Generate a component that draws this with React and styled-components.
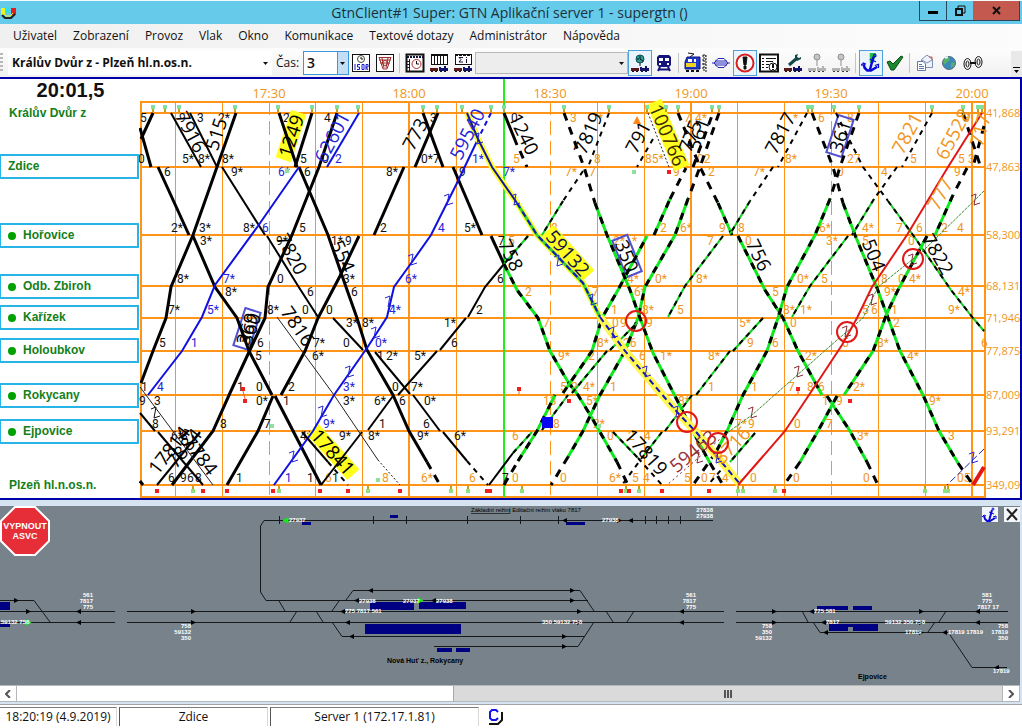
import { useState } from "react";
import styled, { createGlobalStyle, css } from "styled-components";

const GlobalStyle = createGlobalStyle`
  * {
    box-sizing: border-box;
  }
  body {
    margin: 0;
    background: #d6e3f0;
    font-family: "Open Sans", "Noto Sans", sans-serif;
    font-size: 12px;
    color: #111;
  }
  button, select {
    font: inherit;
    color: inherit;
    margin: 0;
  }
`;

const Window = styled.div`
  display: flex;
  flex-direction: column;
  min-height: 100vh;
`;

/* ---------- title bar and menu ---------- */

const TitleBar = styled.header`
  display: flex;
  align-items: center;
  height: 24px;
  background: #66cbea;
  border-top: 1px solid #f4fbfd;
`;

const AppLogo = styled.svg`
  width: 18px;
  height: 16px;
`;

const Title = styled.h1`
  flex: 1;
  margin: 0;
  padding-left: 82px;
  text-align: center;
  font-size: 14px;
  line-height: 22px;
  font-weight: 400;
  color: #1d3038;
`;

const WindowButtons = styled.div`
  display: flex;
  align-self: flex-start;
  margin-right: 2px;
`;

const WindowButton = styled.button`
  display: flex;
  align-items: center;
  justify-content: center;
  width: ${(p) => (p.$close ? 47 : 28)}px;
  height: 20px;
  padding: 0;
  border: 1px solid #27495a;
  border-top: none;
  border-left-width: ${(p) => (p.$close ? 0 : 1)}px;
  margin-right: ${(p) => (p.$close ? 0 : -1)}px;
  background: ${(p) => (p.$close ? "#c4594f" : "#66cbea")};
`;

const MenuBar = styled.nav`
  display: flex;
  align-items: center;
  gap: 16px;
  height: 24px;
  padding-left: 13px;
  background: linear-gradient(90deg, #f0f0f0, #fcfcfc);
`;

const MenuItem = styled.button`
  padding: 0;
  border: none;
  background: none;
  font-size: 12px;
  line-height: 20px;
`;

/* ---------- toolbar ---------- */

const Toolbar = styled.div`
  display: flex;
  align-items: center;
  height: 29px;
  background: linear-gradient(#fdfdfd, #f1f1f1);
`;

const Grip = styled.div`
  width: 3px;
  height: 20px;
  margin-right: 5px;
  background: repeating-linear-gradient(#b8b8b8 0 2px, transparent 2px 4px);
`;

const SelectWrap = styled.div`
  position: relative;
  display: flex;
  width: ${(p) => p.$width}px;
  height: ${(p) => p.$height}px;

  svg {
    position: absolute;
    right: 3px;
    top: 50%;
    margin-top: -1px;
    pointer-events: none;
  }
`;

const RouteSelect = styled.select`
  appearance: none;
  width: 100%;
  padding: 0 4px;
  border: none;
  background: #fff;
  font-weight: 700;
`;

const TimeSelect = styled.select`
  appearance: none;
  width: 100%;
  padding: 0 3px;
  border: 1px solid #3d97dc;
  background: linear-gradient(90deg, #fff 33px, #3d97dc 33px 34px, #c4dff5 34px);
  font-size: 14px;
  font-weight: 600;
`;

const TrainSelect = styled.select`
  appearance: none;
  width: 100%;
  border: 1px solid #b8b8b8;
  background: #ededed;
  opacity: 1;
`;

const TimeLabel = styled.label`
  margin: 0 4px;
`;

const ToolButton = styled.button`
  display: flex;
  align-items: center;
  justify-content: center;
  flex: none;
  width: ${(p) => (p.$wide ? 27 : 24)}px;
  height: 26px;
  padding: 0;
  border: 1px solid transparent;
  background: none;
  ${(p) =>
    p.$active &&
    css`
      border-color: #4f9fdb;
      background: #eaf4fd;
    `}
`;

const Separator = styled.div`
  width: 1px;
  height: 20px;
  margin: 0 3px 0 2px;
  background: #c4c4c4;
`;

const Overflow = styled.button`
  align-self: flex-end;
  width: 11px;
  height: 26px;
  padding: 12px 0 0;
  margin-left: auto;
  border: none;
  background: #e9e9e9;
  line-height: 0;
`;

/* ---------- train graph ---------- */

const GraphPanel = styled.main`
  display: flex;
  background: #fff;
  border: 2px solid #0000a8;
  border-left: none;
`;

const StationColumn = styled.div`
  flex: none;
  display: flex;
  flex-direction: column;
  width: 139px;
  font-family: "Liberation Sans", Arial, sans-serif;
`;

const Clock = styled.time`
  padding-left: 2px;
  font-size: 20px;
  line-height: 22px;
  font-weight: 700;
  text-align: center;
`;

const stationText = css`
  height: 25px;
  font-size: 12px;
  line-height: 21px;
  font-weight: 700;
  color: #14801a;
`;

const StationName = styled.div`
  ${stationText}
  margin-top: ${(p) => p.$gap}px;
  padding: 2px 0 2px 9px;
`;

const StationButton = styled.button`
  ${stationText}
  display: flex;
  align-items: center;
  gap: 7px;
  margin-top: ${(p) => p.$gap}px;
  padding: 0 7px;
  border: 2px solid #27b4e6;
  border-left-width: 1px;
  background: #fff;
  text-align: left;
`;

const Dot = styled.span`
  width: 8px;
  height: 8px;
  border-radius: 50%;
  background: #00a000;
`;

const Graph = styled.svg`
  flex: 1;
  min-width: 0;
  height: 419px;
`;

const GridLine = styled.line`
  stroke: #ff9418;
  stroke-width: ${(p) => p.$width || 1};
  stroke-dasharray: ${(p) => (p.$dashed ? "14 6" : "none")};
  shape-rendering: crispEdges;
`;

const AxisText = styled.text`
  font-size: ${(p) => (p.$middle ? 13 : 11)}px;
  fill: #f0961c;
  text-anchor: ${(p) => (p.$middle ? "middle" : "start")};
`;

const Minute = styled.text`
  font-family: Roboto, "Open Sans", sans-serif;
  font-size: 12px;
  fill: ${(p) => p.$color};
`;

const Track = styled.polyline`
  fill: none;
  stroke: ${(p) => p.$color};
  stroke-width: ${(p) => p.$width};
  stroke-dasharray: ${(p) => p.$dash || "none"};
`;

const TrainText = styled.text`
  font-family: "Open Sans", "Noto Sans", sans-serif;
  font-size: 19px;
  font-weight: 400;
  fill: ${(p) => p.$color || "#000"};
  text-anchor: middle;
`;

const TIMES = [
  [269, "17:30"], [409, "18:00"], [550, "18:30"], [691, "19:00"], [831, "19:30"], [972, "20:00"],
];

const COLUMNS = [175, 222, 315, 362, 456, 597, 644, 737, 784, 878, 925];

const KILOMETRES = [
  [113, "41,868"], [167, "47,863"], [235, "58,300"], [286, "68,131"], [318, "71,946"],
  [351, "77,875"], [395, "87,009"], [431, "93,291"], [485, "349,09"],
];

const STROKES = {
  main: [["#000", 3]],
  slow: [["#000", 2]],
  thin: [["#222", 1]],
  dot: [["#222", 1, "2 2"]],
  plan: [["#000", 3, "8 7"]],
  planSlow: [["#000", 2, "5 5"]],
  ahead: [["#10e820", 3], ["#000", 3, "7 8"]],
  aheadSlow: [["#10d020", 2], ["#000", 2, "5 5"]],
  blue: [["#1010e0", 2]],
  blueDash: [["#1010e0", 2, "5 4"]],
  blueThin: [["#2020b0", 1, "7 3"]],
  followed: [["#ffff30", 6], ["#1515a0", 2]],
  followedAhead: [["#ffff30", 6], ["#3ad23a", 3], ["#1515c0", 2, "6 4"]],
  followedPlan: [["#fff850", 8], ["#1515c0", 2, "6 4"]],
  red: [["#e01818", 2]],
  redWide: [["#e01818", 4]],
  freight: [["#3a8a2a", 1, "3 1"]],
  freightDot: [["#902030", 1, "2 3"]],
};

const TRACKS = [
  ["main", "153,113 141,139"],
  ["main", "140,128 151,167"],
  ["main", "158,167 189,235"],
  ["main", "193,236 215,287 237,318 249,351 272,395"],
  ["main", "275,396 321,485"],
  ["main", "236,113 217,167 193,235 171,287 166,318 153,351 141,383"],
  ["slow", "171,113 201,167"],
  ["slow", "190,113 217,167"],
  ["slow", "222,167 265,235"],
  ["slow", "267,236 300,289 318,317"],
  ["slow", "333,318 363,350"],
  ["slow", "375,352 410,394"],
  ["slow", "413,395 440,431"],
  ["slow", "443,432 467,461"],
  ["planSlow", "467,461 488,485"],
  ["main", "312,113 295,167"],
  ["main", "279,113 297,167"],
  ["main", "299,167 328,235 346,287 357,318 367,350 393,395 409,431 427,462"],
  ["plan", "427,462 440,485"],
  ["main", "337,113 319,167 292,235 268,287 265,318 249,352 230,393 213,431 172,485"],
  ["main", "359,236 340,276 318,318 305,351 281,395"],
  ["main", "273,396 258,431 227,485"],
  ["main", "423,113 443,167"],
  ["main", "438,113 415,167"],
  ["main", "404,167 374,235"],
  ["main", "453,167 482,235"],
  ["main", "491,236 504,264"],
  ["slow", "504,264 485,287 468,317"],
  ["slow", "466,318 440,350"],
  ["slow", "437,351 398,395"],
  ["slow", "393,396 368,430"],
  ["slow", "362,432 321,485"],
  ["thin", "277,317 334,395 378,460"],
  ["dot", "378,460 400,485"],
  ["thin", "140,387 213,485"],
  ["slow", "140,413 155,431"],
  ["slow", "158,432 203,485"],
  ["slow", "200,432 157,485"],
  ["main", "140,481 143,485"],
  ["blue", "359,113 327,167"],
  ["blue", "299,167 258,226 215,285 202,317 182,351 148,395"],
  ["blueDash", "491,113 478,139"],
  ["blue", "478,139 458,181 431,235 412,262 394,287 387,317 367,348 334,395 313,431 274,485"],
  ["aheadSlow", "528,236 504,264"],
  ["ahead", "504,264 517,290 538,318 550,351 568,382 578,395 592,418 617,462"],
  ["plan", "617,462 628,485"],
  ["slow", "489,485 513,453"],
  ["aheadSlow", "513,453 532,432"],
  ["plan", "504,485 518,461"],
  ["ahead", "518,461 537,431 555,395"],
  ["ahead", "563,393 592,351 602,318 618,290 647,236"],
  ["ahead", "654,235 670,199"],
  ["plan", "670,199 686,168"],
  ["plan", "693,167 713,113"],
  ["plan", "719,113 700,167 688,199"],
  ["ahead", "688,199 675,235 645,287 638,318 625,351 600,395 583,431 568,457"],
  ["plan", "568,457 551,485"],
  ["main", "504,113 517,145"],
  ["plan", "520,151 527,167"],
  ["plan", "564,113 584,167 595,203"],
  ["ahead", "595,203 607,235 630,290 640,318 653,353 677,400 692,430 710,463"],
  ["plan", "710,463 723,485"],
  ["planSlow", "609,113 588,167"],
  ["planSlow", "583,171 563,201"],
  ["aheadSlow", "563,201 542,235"],
  ["planSlow", "653,139 637,167"],
  ["dot", "648,113 669,167"],
  ["plan", "678,113 700,167 718,203"],
  ["ahead", "718,203 732,235"],
  ["ahead", "738,236 765,290 783,318 798,351 822,395"],
  ["ahead", "827,396 850,431 867,462"],
  ["plan", "867,462 878,485"],
  ["planSlow", "807,113 778,167"],
  ["planSlow", "773,167 750,201"],
  ["aheadSlow", "750,201 730,234"],
  ["aheadSlow", "723,236 685,286 668,317"],
  ["aheadSlow", "763,318 733,351"],
  ["aheadSlow", "730,351 696,395"],
  ["aheadSlow", "692,395 665,431"],
  ["aheadSlow", "662,432 644,455"],
  ["planSlow", "644,455 622,485"],
  ["aheadSlow", "542,430 568,395"],
  ["aheadSlow", "572,393 607,351"],
  ["aheadSlow", "610,350 637,323"],
  ["plan", "859,113 840,167 830,199"],
  ["ahead", "830,199 815,235 787,287 778,318 767,351 743,395 727,431 716,452"],
  ["plan", "716,452 693,485"],
  ["plan", "812,113 833,167 843,203"],
  ["ahead", "843,203 855,235 877,288 887,315 900,351 923,395 939,431 958,463"],
  ["plan", "958,463 973,485"],
  ["planSlow", "836,113 863,167 888,201"],
  ["aheadSlow", "888,201 913,235 951,290 973,318 984,331"],
  ["planSlow", "932,113 902,167"],
  ["planSlow", "897,167 874,199"],
  ["aheadSlow", "874,199 852,235"],
  ["aheadSlow", "848,236 810,286 792,317"],
  ["plan", "963,113 980,165"],
  ["plan", "984,126 973,167"],
  ["plan", "967,168 953,195"],
  ["ahead", "953,195 935,235"],
  ["ahead", "927,236 898,290 887,313 873,351 844,395"],
  ["ahead", "837,396 818,431 800,462"],
  ["plan", "800,462 784,485"],
  ["aheadSlow", "755,433 730,462"],
  ["planSlow", "727,463 708,485"],
  ["aheadSlow", "613,432 638,458"],
  ["planSlow", "638,458 662,485"],
  ["slow", "302,432 328,462"],
  ["planSlow", "328,462 348,485"],
  ["freight", "984,191 923,251 878,287 863,318 837,340 752,415 727,433"],
  ["freightDot", "727,433 667,485"],
  ["blueThin", "984,449 947,485"],
  ["followed", "467,113 478,139 492,167 517,203"],
  ["followedAhead", "517,203 537,235 583,283 600,317"],
  ["followedPlan", "600,317 625,351 677,412 697,433 740,484"],
  ["red", "982,113 948,167 907,235 872,287 857,318 842,345 817,383 785,431 738,485"],
  ["redWide", "973,485 984,467"],
];

const DARK = "#111";
const BLUE = "#2424d8";
const ORANGE = "#f0961c";

// [baseline, colour, "x:text ..."]
const MINUTES = [
  [122, DARK, "140:5 179:9 197:3 218:2* 283:2 324:4 430:3 511:0"],
  [163, DARK, "138:0 182:5* 198:8* 222:8* 300:5 322:0 421:0*7"],
  [163, BLUE, "335:2 472:1*"],
  [176, DARK, "164:6 231:9* 304:6 386:8* 459:9"],
  [176, BLUE, "278:6* 503:7*"],
  [232, DARK, "171:2* 199:3* 243:8* 299:5 380:2 464:5*"],
  [232, BLUE, "262:6 438:4"],
  [245, DARK, "200:3* 276:9* 331:1* 345:9 498:7"],
  [283, DARK, "177:8* 277:0 343:3* 497:6"],
  [283, BLUE, "223:7* 405:6*"],
  [296, DARK, "225:8* 307:6 351:6"],
  [314, DARK, "168:7* 267:8* 302:0 326:0 476:2"],
  [314, BLUE, "207:5* 389:4*"],
  [327, DARK, "346:3* 362:8* 444:1*"],
  [347, DARK, "159:5 257:6 313:7* 343:0 451:6"],
  [347, BLUE, "191:1 375:0*"],
  [360, DARK, "255:5 312:6* 377:1 386:2* 414:5*"],
  [391, DARK, "141:1 237:1 256:0 288:2 392:0 411:7*"],
  [391, BLUE, "157:4 343:3*"],
  [405, DARK, "139:9 154:3 256:0* 283:1 343:3* 374:6* 399:6 424:0*"],
  [428, DARK, "152:8 220:8 264:7 379:1 423:6"],
  [428, BLUE, "323:9*"],
  [440, DARK, "171:6* 181:8 300:4* 339:9* 368:8* 417:9* 454:6*"],
  [482, DARK, "168:6 180:9 187:6 195:8 236:1 307:1 332:1 502:7"],
  [482, BLUE, "285:1"],
  [122, ORANGE, "570:3 598:* 684:7 695:4* 793:* 818:6 847:8 963:8"],
  [163, ORANGE, "513:5 594:8 645:85* 697:02 785:8* 847:27 910:5 958:5 968:3"],
  [176, ORANGE, "565:7* 589:7 673:9 708:2 753:7* 837:0 881:4 954:9"],
  [232, ORANGE, "551:8 660:2 680:6* 719:9 738:8 819:6* 862:4* 896:7 916:6 941:2 957:4"],
  [245, ORANGE, "508:5 547:6 613:2* 632:* 707:7 745:0 826:3* 862:5 908:0"],
  [283, ORANGE, "627:4* 655:0* 696:8* 797:0* 821:5 881:8 898:0 909:4*"],
  [296, ORANGE, "525:2 592:7 634:6* 772:5 884:9* 958:4*"],
  [314, ORANGE, "611:1 642:8* 677:5 783:8* 800:1* 862:5 871:6 891:1 948:9*"],
  [327, ORANGE, "543:7 612:0 620:9 646:9 739:5* 790:0 893:2"],
  [347, ORANGE, "597:8* 623:26 747:9 772:6 842:5 877:8* 981:6"],
  [360, ORANGE, "558:9* 588:2 639:6 660:1* 708:8* 805:2* 907:4*"],
  [391, ORANGE, "560:5* 571:2 583:4* 610:1 708:1 751:1 788:7 807:8 818:6 853:2*"],
  [405, ORANGE, "543:13 586:5* 678:8* 822:1 836:9 929:9*"],
  [428, ORANGE, "553:8 593:2* 735:7* 748:9 794:0 826:7"],
  [440, ORANGE, "512:6 607:0 628:2 644:4 857:3* 948:3"],
  [482, ORANGE, "325:6 382:8 421:6* 469:6 512:0 560:0 609:6* 632:5 643:4 684:5 701:0 709:7 722:4 750:0 793:0 863:0 957:05"],
];

// number, centre x, centre y, angle, colour, box
const TRAINS = [
  ["7916", 191, 132, 62],
  ["515", 216, 134, -72],
  ["1249", 291, 136, -72, "#000", "plate"],
  ["62601", 332, 137, -62, BLUE],
  ["773", 415, 134, -62],
  ["59540", 467, 134, -63, BLUE],
  ["1240", 524, 134, 64],
  ["7819", 588, 133, -66],
  ["791", 638, 137, -62],
  ["100766", 668, 135, 67, "#3a2c00", "plate"],
  ["775", 690, 136, -68],
  ["561", 698, 134, -70],
  ["7817", 780, 133, -62],
  ["361", 840, 136, -72, "#000", "frame"],
  ["7821", 907, 133, -62, ORANGE],
  ["65528", 953, 134, -62, ORANGE],
  ["777", 940, 194, -62, ORANGE],
  ["717", 980, 130, -75, ORANGE],
  ["7820", 292, 254, 62],
  ["554", 343, 256, 66],
  ["758", 511, 255, 64],
  ["59132", 568, 253, 48, "#101050", "plate"],
  ["350", 627, 256, 68, "#000", "frame"],
  ["756", 759, 255, 64],
  ["504", 874, 255, 68],
  ["7822", 938, 254, 60],
  ["369", 247, 329, -72, "#000", "frame"],
  ["360", 250, 329, -72],
  ["7816", 298, 326, 56],
  ["17814", 169, 450, -52],
  ["17784", 197, 451, 52],
  ["7884", 184, 448, -52],
  ["17841", 333, 452, 48, "#000", "plate"],
  ["17819", 646, 452, 48],
  ["59463", 693, 451, -40, "#96303a"],
  ["8716", 732, 445, -46, ORANGE],
];

const ZED_MARKS = [
  [448, 200, BLUE], [515, 200, BLUE], [412, 260, BLUE], [478, 139, BLUE], [349, 372, BLUE],
  [322, 412, BLUE], [293, 457, BLUE], [389, 302, BLUE], [375, 333, BLUE], [558, 261, BLUE],
  [592, 300, BLUE], [613, 333, BLUE], [646, 372, BLUE], [677, 412, BLUE], [717, 458, BLUE],
  [973, 458, BLUE], [155, 413, DARK], [752, 413, "#8a2a34"], [798, 372, "#8a2a34"],
  [698, 458, "#8a2a34"], [872, 300, "#8a2a34"], [846, 332, "#8a2a34"], [975, 200, "#8a2a34"],
  [912, 260, "#8a2a34"],
];

const CONFLICTS = [[636, 321], [687, 422], [718, 443], [847, 332], [913, 259]];

const TOP_MARKS = [
  153, 165, 179, 235, 278, 312, 337, 358, 423, 437, 462, 491, 504, 564, 609, 647, 666, 678, 712,
  719, 808, 812, 834, 859, 932, 963, 978, 982,
];
const BOTTOM_RED = [157, 203, 227, 273, 320, 348, 400, 487, 490, 621, 629, 662, 709, 784];
const BOTTOM_GREEN = [193, 279, 368, 451, 468, 522, 626, 639, 738, 743, 775, 925, 945, 948];
const LOOSE_MARKS = [
  [287, 171, "#90e0a0"], [634, 172, "#90e0a0"], [669, 172, "#f02020"], [243, 389, "#f02020"],
  [245, 401, "#f02020"], [519, 389, "#f02020"], [569, 401, "#f02020"], [798, 389, "#f02020"],
  [850, 401, "#f02020"], [272, 426, "#90e0a0"], [378, 480, "#90e0a0"], [599, 426, "#90e0a0"],
];

function TrainBox({ number, x, y, angle, box }) {
  const length = number.length * 11 + 6;
  return (
    <rect
      transform={`translate(${x} ${y}) rotate(${angle})`}
      x={-length / 2}
      y={-8}
      width={length}
      height={16}
      fill={box === "plate" ? "#ffff20" : "none"}
      stroke={box === "frame" ? "#5050d0" : "none"}
      strokeWidth="2"
    />
  );
}

function TrainGraph() {
  return (
    <Graph viewBox="139 79 881 419" preserveAspectRatio="xMinYMin meet">
      {COLUMNS.map((x) => (
        <GridLine key={x} x1={x} x2={x} y1={101} y2={497} />
      ))}
      {TIMES.map(([x, label], i) => (
        <g key={label}>
          <GridLine x1={x} x2={x} y1={101} y2={497} $dashed={i % 2 === 0} $width={i % 2 ? 2 : 1} />
          <AxisText x={x} y={98} $middle>{label}</AxisText>
        </g>
      ))}
      {KILOMETRES.map(([y, label]) => (
        <g key={label}>
          <GridLine x1={140} x2={984} y1={y} y2={y} $width={2} />
          <AxisText x={986} y={y + 4}>{label}</AxisText>
        </g>
      ))}
      <rect x={141} y={102} width={844} height={395} fill="none" stroke="#ff9418" strokeWidth="2" />
      <line x1={504} x2={504} y1={79} y2={497} stroke="#20f020" strokeWidth="2" />

      {MINUTES.map(([y, color, list]) =>
        list.split(" ").map((entry) => {
          const [x, label] = entry.split(":");
          return (
            <Minute key={`${y}-${entry}`} x={x} y={y} $color={color}>{label}</Minute>
          );
        })
      )}

      {TRAINS.filter((t) => t[5]).map(([number, x, y, angle, , box]) => (
        <TrainBox key={number} number={number} x={x} y={y} angle={angle} box={box} />
      ))}

      {TRACKS.map(([kind, points], i) =>
        STROKES[kind].map(([color, width, dash], j) => (
          <Track key={`${i}-${j}`} points={points} $color={color} $width={width} $dash={dash} />
        ))
      )}

      {TRAINS.map(([number, x, y, angle, color]) => (
        <TrainText
          key={number}
          transform={`translate(${x} ${y}) rotate(${angle})`}
          y={7}
          $color={color}
        >
          {number}
        </TrainText>
      ))}

      {ZED_MARKS.map(([x, y, color]) => (
        <path
          key={`${x}-${y}`}
          d="M-4 -4 L1 -6 L-1 5 L5 3"
          transform={`translate(${x} ${y})`}
          fill="none"
          stroke={color}
        />
      ))}
      {CONFLICTS.map(([x, y]) => (
        <circle key={x} cx={x} cy={y} r={10} fill="none" stroke="#e01818" strokeWidth="2" />
      ))}

      {TOP_MARKS.map((x) => (
        <g key={x}>
          <rect x={x - 1} y={108} width={2} height={4} fill="#c0a020" />
          <rect x={x - 2} y={105} width={4} height={4} fill="#80e0a0" />
        </g>
      ))}
      {BOTTOM_GREEN.map((x) => (
        <g key={x}>
          <rect x={x - 1} y={486} width={2} height={4} fill="#c0a020" />
          <rect x={x - 2} y={489} width={4} height={4} fill="#90e080" />
        </g>
      ))}
      {BOTTOM_RED.map((x) => (
        <rect key={x} x={x - 2} y={489} width={4} height={4} fill="#f02020" />
      ))}
      {LOOSE_MARKS.map(([x, y, color]) => (
        <rect key={`${x}-${y}`} x={x - 2} y={y - 2} width={4} height={4} fill={color} />
      ))}
      <path d="M243 391 L245 399 M519 391 V394 M798 391 V394" stroke="#f06020" />
      <path d="M637 116 L641 124 H633 Z" fill="#ff8418" />
      <rect x={542} y={417} width={11} height={11} fill="#0808f0" />
    </Graph>
  );
}

/* ---------- track plan ---------- */

const PlanPanel = styled.section`
  position: relative;
  margin: 6px 2px 0 0;
  height: 179px;
  background: #78828a;
  overflow: hidden;
`;

const Plan = styled.svg`
  display: block;
  width: 100%;
  height: 179px;
  font-family: "Liberation Sans", Arial, sans-serif;
`;

const PlanNumber = styled.text`
  font-size: 6px;
  font-weight: 700;
  fill: #fff;
  text-anchor: ${(p) => (p.$end ? "end" : "start")};
`;

const PlanCaption = styled.text`
  font-size: ${(p) => (p.$small ? 6 : 7)}px;
  font-weight: ${(p) => (p.$small ? 400 : 700)};
  text-decoration: ${(p) => (p.$underline ? "underline" : "none")};
  fill: #000;
`;

const StopButton = styled.button`
  position: absolute;
  left: 0;
  top: 0;
  display: grid;
  place-items: center;
  width: 50px;
  height: 50px;
  padding: 0;
  border: none;
  background: none;
  color: #fff;
  font-family: "Liberation Sans", Arial, sans-serif;
  font-size: 9px;
  line-height: 10px;
  font-weight: 700;

  svg, span {
    grid-area: 1 / 1;
  }
`;

const PlanTools = styled.div`
  position: absolute;
  right: 0;
  top: 1px;
  display: flex;
  gap: 6px;
`;

const PlanTool = styled.button`
  display: flex;
  width: 16px;
  height: 15px;
  padding: 0;
  border: none;
  background: #f2f5fa;
`;

const RAILS =
  "M713 520.5 H264 L260.5 526 V592 L266 600.5 H588 M0 600.5 H34 L50 622 " +
  "M0 611.5 H115 M127 611.5 H724 M736 611.5 H1008 M0 622.5 H115 M127 622.5 H724 M736 622.5 H1008 " +
  "M346 600 L353 590.5 H580 L594 611 M279 601 L285 611 M297 611 L290 622 M316 611 L323 622 " +
  "M339 601 L332 611 M332 622 L342 636.5 H584 M434 646.5 H578 L594 622 M606 611 L613 622 " +
  "M634 611 L627 622 M802 611 L808 622 M813 622 L820 632.5 H948 M928 632 L935 622 " +
  "M939 622 L946 611 M950 635 L972 667.5 H1007";

const TICKS = [279, 373, 406, 467, 520, 558, 645, 656, 668, 680];

const ARROWS = {
  600: "16r 357l 434l 572r",
  611: "28r 79l 193r 343l 579r 682l 774r 812l 921r 978l",
  622: "79l 193r 348l 579r 682l 774r 824l 921r 978l",
  590: "371l 572r",
  520: "565l 619r 631l",
  636: "352l 564r",
  646: "564r",
  632: "826l 921r 945l",
  667: "997l",
};

const OCCUPIED = [[286, 520, "l"], [28, 622, "r"], [420, 600, "r"]];

const PLATFORMS = [
  [390, 515, 8, 3], [302, 522, 9, 3], [566, 522, 19, 3], [0, 602, 10, 8], [0, 624, 10, 3],
  [370, 602, 44, 8], [419, 602, 47, 7], [365, 624, 96, 10], [437, 648, 15, 4], [456, 648, 14, 4],
  [817, 606, 31, 4], [853, 606, 19, 4], [829, 624, 49, 3], [829, 627, 19, 4], [853, 627, 25, 4],
];

const PLAN_NUMBERS = [
  [289, 522, "27937"], [602, 522, "27938"], [1, 624, "59132 758"], [359, 603, "27938"],
  [403, 603, "27937"], [436, 603, "27938"], [345, 613, "775 7817 561"],
  [542, 624, "350 59132 758"], [814, 613, "775 581"], [826, 624, "7817"],
  [885, 624, "59132 350 758"], [905, 634, "17819"], [948, 634, "17819 17819"],
  [993, 673, "17819"],
];

const PLAN_STACKS = [
  [713, 512, ["27838", "27938"]],
  [93, 597, ["561", "7817", "775"]],
  [696, 597, ["561", "7817", "775"]],
  [992, 597, ["581", "775"]],
  [999, 609, ["7817 17"]],
  [191, 628, ["758", "59132", "350"]],
  [772, 628, ["758", "350", "59132"]],
  [1008, 628, ["758", "17819", "350"]],
];

const arrowPath = (x, y, dir) =>
  dir === "r" ? `M${x - 2} ${y - 2} L${x + 3} ${y + 0.5} L${x - 2} ${y + 3} Z`
    : `M${x + 2} ${y - 2} L${x - 3} ${y + 0.5} L${x + 2} ${y + 3} Z`;

function AnchorIcon({ size = 16, green }) {
  return (
    <svg width={size} height={size} viewBox="0 0 16 16" fill="none" stroke="#0808d8">
      {green && <path d="M7 0 H12 L10 8 H7 Z" fill="#20c040" stroke="none" />}
      <circle cx="11" cy="2" r="1" />
      <path d="M10 3 L7 14" strokeWidth="2" />
      <path d="M7 5 L12 7" />
      <path d="M2 9 L3 12 L5 14 H8 L13 11" strokeWidth="2" />
      <path d="M0 10 L2 8 L4 9 M11 10 L14 9 L14 12" />
    </svg>
  );
}

function TrackPlan() {
  return (
    <PlanPanel>
      <Plan viewBox="0 506 1020 179" preserveAspectRatio="xMinYMin meet">
        {PLATFORMS.map(([x, y, w, h]) => (
          <rect key={`${x}-${y}`} x={x} y={y} width={w} height={h} fill="#000082" />
        ))}
        <path d={RAILS} fill="none" stroke="#15191c" />
        {TICKS.map((x) => (
          <rect key={x} x={x} y={516} width={1} height={8} fill="#15191c" />
        ))}
        {Object.entries(ARROWS).map(([y, list]) =>
          list.split(" ").map((a) => (
            <path key={`${y}-${a}`} d={arrowPath(parseInt(a, 10), Number(y), a.slice(-1))} />
          ))
        )}
        {OCCUPIED.map(([x, y, dir]) => (
          <path key={x} d={arrowPath(x, y, dir)} fill="#10f010" stroke="#10f010" />
        ))}
        {PLAN_NUMBERS.map(([x, y, label]) => (
          <PlanNumber key={`${x}-${y}`} x={x} y={y}>{label}</PlanNumber>
        ))}
        {PLAN_STACKS.map(([x, y, lines]) =>
          lines.map((label, i) => (
            <PlanNumber key={`${x}-${label}-${i}`} x={x} y={y + i * 6} $end>{label}</PlanNumber>
          ))
        )}
        <PlanCaption x={471} y={512} $small $underline>Základní režim</PlanCaption>
        <PlanCaption x={509} y={512} $small>| Editační režim vlaku 7817</PlanCaption>
        <PlanCaption x={387} y={663}>Nová Huť z., Rokycany</PlanCaption>
        <PlanCaption x={858} y={679}>Ejpovice</PlanCaption>
      </Plan>
      <StopButton>
        <svg width="50" height="50" viewBox="0 0 50 50">
          <path d="M15 1 H35 L49 15 V35 L35 49 H15 L1 35 V15 Z" fill="#e62e38" stroke="#fff" strokeWidth="2" />
        </svg>
        <span>VYPNOUT<br />ASVC</span>
      </StopButton>
      <PlanTools>
        <PlanTool aria-label="Ukotvit"><AnchorIcon size={16} /></PlanTool>
        <PlanTool aria-label="Zavřít panel">
          <svg width="16" height="15" viewBox="0 0 16 15" stroke="#222" strokeWidth="2">
            <path d="M3 2 L13 13 M13 2 L3 13" />
          </svg>
        </PlanTool>
      </PlanTools>
    </PlanPanel>
  );
}

/* ---------- scroll bar and status ---------- */

const ScrollBar = styled.div`
  display: flex;
  height: 17px;
  margin-right: 2px;
  border: 1px solid #b4b8bc;
  border-left: none;
  background: #fff;
`;

const ScrollButton = styled.button`
  display: flex;
  align-items: center;
  justify-content: center;
  flex: none;
  width: 17px;
  padding: 0;
  border: none;
  border-${(p) => p.$side}: 1px solid #b4b8bc;
  background: #fff;
`;

const ScrollTrack = styled.div`
  flex: 1;
  display: grid;
  grid-template-columns: 31fr 39fr;
`;

const ScrollThumb = styled.div`
  grid-column: 2;
  display: flex;
  align-items: center;
  justify-content: center;
  background: #dadada;
  border-left: 1px solid #a8a8a8;
`;

const StatusBar = styled.footer`
  display: flex;
  flex: 1;
  gap: 2px;
  margin-top: 2px;
  min-height: 24px;
  padding-top: 2px;
  background: #fff;
  border-top: 1px solid #a0a4a8;
`;

const StatusCell = styled.div`
  width: ${(p) => p.$width}px;
  height: 19px;
  border-top: 1px solid #7c7c7c;
  border-left: ${(p) => (p.$first ? "none" : "1px solid #555")};
  border-right: 1px solid #d8d8d8;
  font-size: 12px;
  line-height: 18px;
  text-align: center;
`;

const StatusIcon = styled.svg`
  width: 18px;
  height: 20px;
  margin-left: 6px;
`;

/* ---------- toolbar icons ---------- */

const Caret = () => (
  <svg width="7" height="4" viewBox="0 0 7 4"><path d="M1 0 H6 L3.5 3 Z" fill="#111" /></svg>
);

const Icon = ({ children }) => (
  <svg width="20" height="20" viewBox="0 0 20 20" fill="none" stroke="#111">
    {children}
  </svg>
);

const Wagons = ({ color = "#58181c", loco = "#12126a" }) => (
  <g stroke="none">
    <path d="M1 15 H9 V18 H1 Z" fill={color} />
    <path d="M10 14 H12 V15 H15 V13 H17 V15 H19 V18 H10 Z" fill={loco} />
    <path d="M2 18 H4 V19 H2 Z M6 18 H8 V19 H6 Z M11 18 H13 V19 H11 Z M15 18 H17 V19 H15 Z" fill="#111" />
  </g>
);

const IsorIcon = () => (
  <Icon>
    <rect x="1.5" y="1.5" width="17" height="17" fill="#fff" />
    <circle cx="10" cy="6" r="3.5" stroke="#45452c" />
    <path d="M10 4 V6 H12" />
    <path d="M4 11 V17 M9 11.5 H6.5 V14 H8.5 V16.5 H6 M11 11.5 H13 V16.5 H11 Z M15 17 V11.5 H17 V14 H15 L17 17" stroke="#1818d0" />
  </Icon>
);

const NetIcon = () => (
  <Icon>
    <rect x="1.5" y="1.5" width="17" height="17" fill="#fff" />
    <path d="M4 4.5 H16 M4 7 H16 M5 10 H15 M4 4 L8 16 H12 L16 4 M7 5 L9 15 M13 5 L11 15" stroke="#a02c2c" />
    <circle cx="10" cy="10" r="2.5" stroke="#a02c2c" />
  </Icon>
);

const ScheduleIcon = () => (
  <Icon>
    <rect x="1.5" y="1.5" width="17" height="17" fill="#fff" strokeWidth="2" />
    <path d="M2 4 H18" stroke="#12123a" strokeWidth="2" strokeDasharray="2 1" />
    <path d="M4.5 6 V18 M2 8.5 H5 M2 11.5 H5 M2 14.5 H5" stroke="#12123a" />
    <circle cx="11.5" cy="11" r="4.5" fill="#fff" stroke="#c02828" />
    <path d="M11.5 8 V11 H14" />
  </Icon>
);

const TableIcon = () => (
  <Icon>
    <rect x="2.5" y="1.5" width="16" height="10" fill="#fff" />
    <path d="M5.5 2 V11 M8.5 2 V11 M11.5 2 V11 M14.5 2 V11" />
    <path d="M2 2 H19" strokeWidth="2" />
    <Wagons />
  </Icon>
);

const SumIcon = () => (
  <Icon>
    <rect x="2.5" y="1.5" width="16" height="10" fill="#fff" />
    <path d="M2 2 H19" strokeWidth="2" strokeDasharray="3 1" />
    <path d="M10 4.5 H6 L8 6.5 L6 9 H10 M13.5 4 V5 M13.5 6 V10" stroke="#12123a" />
    <Wagons />
  </Icon>
);

const ClockTrainIcon = () => (
  <Icon>
    <circle cx="10" cy="6" r="4" fill="#28a0a0" stroke="#0e4a4a" />
    <path d="M10 3 V6 L13 8 M7 6 H9 M10 10 V13" />
    <Wagons />
  </Icon>
);

const TrainIcon = () => (
  <Icon>
    <path d="M5 2 H15 L17 4 V12 L15 14 H5 L3 12 V4 Z" fill="#14147a" stroke="none" />
    <path d="M5 5 H9 V8 H5 Z M11 5 H15 V8 H11 Z M5 10 H7 V12 H5 Z M13 10 H15 V12 H13 Z" fill="#fff" stroke="none" />
    <path d="M6 14 L4 18 M14 14 L16 18 M5 16.5 H15" stroke="#14147a" strokeWidth="2" />
  </Icon>
);

const LocoIcon = () => (
  <svg width="24" height="22" viewBox="0 0 24 22" fill="none" stroke="#111">
    <path d="M4 1 L10 2 L6 5" />
    <path d="M3 5 H16 V17 H1 V10 Z" fill="#2038c8" stroke="#101880" />
    <path d="M2 11 H12 V15 H2 Z" fill="#f0d020" stroke="none" />
    <path d="M4 7 H8 V10 H4 Z M10 7 H12 V10 H10 Z" fill="#fff" stroke="none" />
    <path d="M2 19 H5 M7 19 H10 M12 19 H15" strokeWidth="2" />
    <path d="M20 2 V20 M22 3 V20 M18 4 H22 M18 8 H22 M18 12 H22 M18 16 H22" strokeDasharray="2 1" />
  </svg>
);

const LensIcon = () => (
  <Icon>
    <path d="M3 10 L7 5.5 H13 L17 10 L13 14.5 H7 Z M1 10 H19 M4 8 H16 M4 12 H16" stroke="#2828b8" />
  </Icon>
);

const AlertIcon = () => (
  <Icon>
    <circle cx="10" cy="10" r="8.5" fill="#fff" stroke="#d82020" strokeWidth="2" />
    <path d="M8 4 H12 L11 12 H9 Z M9 13 H11 V16 H9 Z" fill="#111" />
  </Icon>
);

const LogIcon = () => (
  <Icon>
    <rect x="1" y="1.5" width="18" height="17" fill="#fff" strokeWidth="2" />
    <path d="M3 5.5 H5 M7 5.5 H17 M3 8.5 H5 M7 8.5 H14 M3 11.5 H5 M7 11.5 H10 M3 14.5 H5 M7 14.5 H9" />
    <circle cx="14" cy="14" r="4" fill="#fff" />
    <path d="M14 11 V15 M14 16 V17" strokeWidth="2" />
  </Icon>
);

const WrenchIcon = () => (
  <Icon>
    <path d="M6 12 L13 6" stroke="#104848" strokeWidth="3" />
    <path d="M12 2 V6 L14 8 L18 6 V4 L16 5 L14 4 L15 1 Z" fill="#104848" stroke="none" />
    <Wagons />
  </Icon>
);

const PinIcon = () => (
  <Icon>
    <circle cx="10" cy="4" r="3" fill="#c4c4c4" stroke="#909090" />
    <path d="M10 7 V13" stroke="#909090" />
    <g opacity="0.8">
      <Wagons color="#a4a4a4" loco="#a4a4a4" />
    </g>
  </Icon>
);

const CheckIcon = () => (
  <Icon>
    <path d="M2 9 L5 8 L8 11 L16 3 L18 4 L9 17 H6 Z" fill="#1c8a2c" stroke="#0c4a18" />
  </Icon>
);

const MailIcon = () => (
  <Icon>
    <path d="M6.5 6.5 L12 2 L17.5 6.5 V14.5 H6.5 Z" fill="#eef2fa" stroke="#8090b0" />
    <path d="M7 7 L12 10 L17 7" stroke="#8090b0" />
    <path d="M14 4 H17 V7" stroke="#c85040" />
    <path d="M2.5 8.5 H8 L10.5 11 V17.5 H2.5 Z" fill="#fff" stroke="#6078a8" />
    <path d="M4 11.5 H7 M4 13.5 H9 M4 15.5 H9" stroke="#6078a8" />
  </Icon>
);

const GlobeIcon = () => (
  <Icon>
    <circle cx="10" cy="10" r="6.5" fill="#3c88b8" stroke="#5c6c78" />
    <path d="M5 6 L9 4 L11 7 L8 9 L6 12 L4 9 Z M12 10 L16 9 L15 13 L12 15 Z" fill="#58b068" stroke="none" />
    <path d="M6 5 L9 4" stroke="#d8f0f8" strokeWidth="2" />
  </Icon>
);

const ChainIcon = () => (
  <Icon>
    <ellipse cx="4.5" cy="11" rx="3.5" ry="5.5" />
    <ellipse cx="4.5" cy="11" rx="1.5" ry="3" />
    <ellipse cx="15.5" cy="9" rx="3.5" ry="5.5" />
    <ellipse cx="15.5" cy="9" rx="1.5" ry="3" />
    <path d="M7 10 H13" strokeWidth="2" />
  </Icon>
);

const ToolAnchor = () => <AnchorIcon size={20} green />;

const MENU = [
  "Uživatel", "Zobrazení", "Provoz", "Vlak", "Okno", "Komunikace", "Textové dotazy",
  "Administrátor", "Nápověda",
];

const STATIONS = [
  { name: "Králův Dvůr z", gap: 0, plain: true },
  { name: "Zdice", gap: 28 },
  { name: "Hořovice", gap: 44, dot: true },
  { name: "Odb. Zbiroh", gap: 26, dot: true },
  { name: "Kařízek", gap: 6, dot: true },
  { name: "Holoubkov", gap: 8, dot: true },
  { name: "Rokycany", gap: 20, dot: true },
  { name: "Ejpovice", gap: 11, dot: true },
  { name: "Plzeň hl.n.os.n.", gap: 29, plain: true },
];

const TOOLS_LEFT = [
  { label: "ISOR", glyph: IsorIcon },
  { label: "Síť", glyph: NetIcon },
  null,
  { label: "Jízdní řád", glyph: ScheduleIcon },
  { label: "Tabulka vlaků", glyph: TableIcon },
  { label: "Součty", glyph: SumIcon },
];

const TOOLS_RIGHT = [
  { label: "Zpoždění", glyph: ClockTrainIcon, active: true },
  { label: "Vlaky", glyph: TrainIcon },
  null,
  { label: "Lokomotivy", glyph: LocoIcon, wide: true },
  { label: "Úseky", glyph: LensIcon },
  { label: "Konflikty", glyph: AlertIcon, active: true },
  { label: "Protokol", glyph: LogIcon },
  { label: "Údržba", glyph: WrenchIcon },
  { label: "Vlak vpřed", glyph: PinIcon },
  { label: "Vlak vzad", glyph: PinIcon },
  null,
  { label: "Kotva", glyph: ToolAnchor, active: true },
  { label: "Potvrdit", glyph: CheckIcon },
  null,
  { label: "Pošta", glyph: MailIcon },
  { label: "Internet", glyph: GlobeIcon },
  { label: "Spojení", glyph: ChainIcon },
];

function ToolGroup({ tools }) {
  return tools.map((tool, i) => {
    if (!tool) return <Separator key={i} />;
    const Glyph = tool.glyph;
    return (
      <ToolButton key={tool.label} aria-label={tool.label} $active={tool.active} $wide={tool.wide}>
        <Glyph />
      </ToolButton>
    );
  });
}

function App() {
  const [hours, setHours] = useState("3");

  return (
    <Window>
      <GlobalStyle />
      <TitleBar>
        <AppLogo viewBox="0 0 18 16">
          <path d="M1 3 H5 V10 H1 Z" fill="#f0f020" />
          <path d="M6 2 H10 V8 H6 Z" fill="#30e0e8" />
          <path d="M11 3 H16 V10 H11 Z" fill="#e02020" />
          <path d="M2 10 L5 13 H11 L15 9" fill="none" stroke="#222" strokeWidth="2" />
          <path d="M3 8 L6 11 H10 L13 8" fill="none" stroke="#f0f020" />
        </AppLogo>
        <Title>GtnClient#1 Super: GTN Aplikační server 1 - supergtn ()</Title>
        <WindowButtons>
          <WindowButton aria-label="Minimalizovat">
            <svg width="10" height="10"><path d="M0 5 H10 V8 H0 Z" /></svg>
          </WindowButton>
          <WindowButton aria-label="Obnovit">
            <svg width="11" height="11" fill="none" stroke="#111">
              <path d="M3 3 V1 H10 V8 H8" strokeWidth="1" />
              <rect x="1" y="4" width="6" height="6" strokeWidth="2" />
            </svg>
          </WindowButton>
          <WindowButton $close aria-label="Zavřít">
            <svg width="9" height="9" stroke="#111" strokeWidth="2">
              <path d="M1 1 L8 8 M8 1 L1 8" />
            </svg>
          </WindowButton>
        </WindowButtons>
      </TitleBar>

      <MenuBar>
        {MENU.map((item) => (
          <MenuItem key={item}>{item}</MenuItem>
        ))}
      </MenuBar>

      <Toolbar>
        <Grip />
        <SelectWrap $width={264} $height={24}>
          <RouteSelect aria-label="Trať">
            <option>Králův Dvůr z - Plzeň hl.n.os.n.</option>
          </RouteSelect>
          <Caret />
        </SelectWrap>
        <TimeLabel htmlFor="hours">Čas:</TimeLabel>
        <SelectWrap $width={46} $height={24}>
          <TimeSelect id="hours" value={hours} onChange={(e) => setHours(e.target.value)}>
            <option>3</option>
            <option>6</option>
          </TimeSelect>
          <Caret />
        </SelectWrap>
        <ToolGroup tools={TOOLS_LEFT} />
        <SelectWrap $width={153} $height={22}>
          <TrainSelect aria-label="Vlak" disabled />
          <Caret />
        </SelectWrap>
        <ToolGroup tools={TOOLS_RIGHT} />
        <Overflow aria-label="Další">
          <svg width="7" height="8" viewBox="0 0 7 8"><path d="M0 1 H7 V2 H0 Z M1 4 H6 L3.5 7 Z" /></svg>
        </Overflow>
      </Toolbar>

      <GraphPanel>
        <StationColumn>
          <Clock>20:01,5</Clock>
          {STATIONS.map((s) =>
            s.plain ? (
              <StationName key={s.name} $gap={s.gap}>{s.name}</StationName>
            ) : (
              <StationButton key={s.name} $gap={s.gap}>
                {s.dot && <Dot />}
                {s.name}
              </StationButton>
            )
          )}
        </StationColumn>
        <TrainGraph />
      </GraphPanel>

      <TrackPlan />

      <ScrollBar>
        <ScrollButton $side="right" aria-label="Posunout vlevo">
          <svg width="6" height="8" fill="none" stroke="#555" strokeWidth="2"><path d="M5 0 L1 4 L5 8" /></svg>
        </ScrollButton>
        <ScrollTrack>
          <ScrollThumb>
            <svg width="9" height="8" fill="#555"><path d="M0 0 H2 V8 H0 Z M3 0 H5 V8 H3 Z M6 0 H8 V8 H6 Z" /></svg>
          </ScrollThumb>
        </ScrollTrack>
        <ScrollButton $side="left" aria-label="Posunout vpravo">
          <svg width="6" height="8" fill="none" stroke="#555" strokeWidth="2"><path d="M1 0 L5 4 L1 8" /></svg>
        </ScrollButton>
      </ScrollBar>

      <StatusBar>
        <StatusCell $width={117} $first>18:20:19 (4.9.2019)</StatusCell>
        <StatusCell $width={149}>Zdice</StatusCell>
        <StatusCell $width={209}>Server 1 (172.17.1.81)</StatusCell>
        <StatusIcon viewBox="0 0 18 20" fill="none">
          <path d="M2 17 H11 L15 13 V5" stroke="#111" strokeWidth="2" />
          <path d="M11 5 L9 3 H5 L3 5 V11 L5 13 H9 L11 11" stroke="#1414e8" strokeWidth="2" />
        </StatusIcon>
      </StatusBar>
    </Window>
  );
}

export default App;
